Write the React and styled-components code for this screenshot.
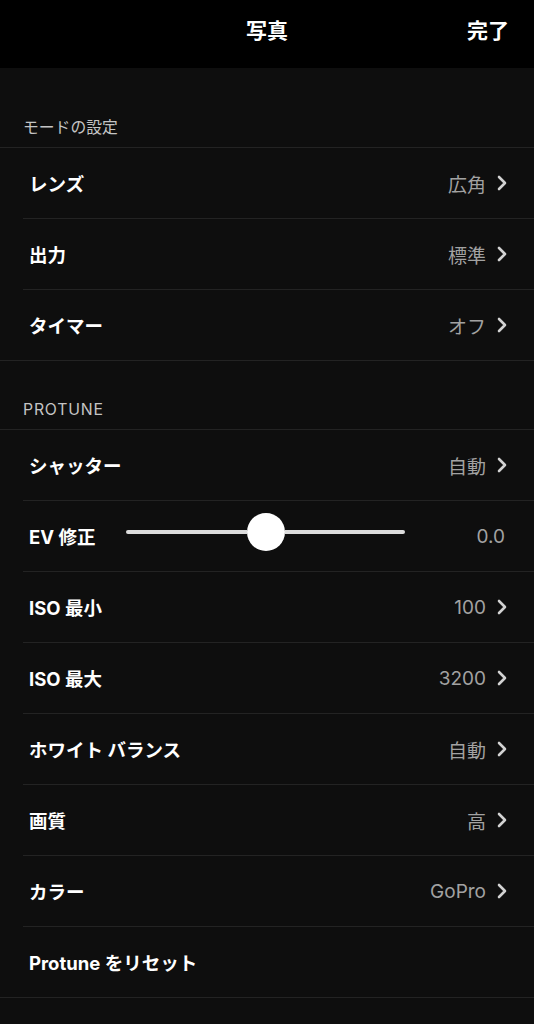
import React from "react";
import styled, { createGlobalStyle } from "styled-components";

const GlobalStyle = createGlobalStyle`
  html, body {
    margin: 0;
    padding: 0;
    background: #0e0e0e;
  }
  body {
    font-family: Inter, "Noto Sans CJK JP", sans-serif;
    -webkit-font-smoothing: antialiased;
  }
`;

const Page = styled.div`
  width: 534px;
  min-height: 1024px;
  background: #0e0e0e;
  color: #fff;
`;

const NavBar = styled.header`
  height: 68px;
  background: #000;
  display: grid;
  grid-template-columns: 1fr auto 1fr;
  align-items: center;
  padding: 0 25px 10px 25px;
  box-sizing: border-box;
`;

const NavTitle = styled.div`
  grid-column: 2;
  font-size: 21px;
  font-weight: 700;
  color: #fff;
`;

const NavAction = styled.div`
  grid-column: 3;
  justify-self: end;
  font-size: 21px;
  font-weight: 700;
  color: #fff;
`;

const SectionHeader = styled.div`
  height: ${(p) => p.$height}px;
  display: flex;
  align-items: flex-end;
  padding: 0 23px 9px;
  box-sizing: border-box;
  font-size: 15.8px;
  line-height: 20px;
  color: #c4c4c4;
  letter-spacing: ${(p) => (p.$latin ? "0.8px" : "0")};
`;

const Group = styled.section`
  border-top: 1px solid #232323;
  border-bottom: 1px solid #232323;
`;

const Row = styled.div`
  height: 70px;
  margin-left: 23px;
  padding: 0 ${(p) => (p.$plain ? 29 : 26)}px 0 6px;
  display: flex;
  align-items: center;
  box-sizing: content-box;
  border-bottom: ${(p) => (p.$last ? "none" : "1px solid #232323")};
`;

const Label = styled.div`
  font-size: 18.5px;
  font-weight: 700;
  color: #fff;
  white-space: nowrap;
  min-width: ${(p) => p.$minWidth || 0}px;
`;

const Value = styled.div`
  margin-left: auto;
  font-size: 19px;
  color: #a2a2a2;
  white-space: nowrap;
`;

const Chevron = styled.svg`
  margin-left: 10px;
  flex: none;
`;

const Slider = styled.div`
  flex: 0 0 279px;
  margin-left: 31px;
  margin-bottom: 8px;
  display: flex;
  align-items: center;
`;

const Track = styled.div`
  flex: 1;
  height: 4px;
  background: #dcdcdc;
  border-radius: ${(p) => (p.$side === "left" ? "2px 0 0 2px" : "0 2px 2px 0")};
`;

const Knob = styled.div`
  width: 38px;
  height: 38px;
  border-radius: 50%;
  background: #fff;
  flex: none;
`;

const ChevronIcon = () => (
  <Chevron width="12" height="16" viewBox="0 0 12 16">
    <polyline
      points="3,2 9,8 3,14"
      fill="none"
      stroke="#d2d2d2"
      strokeWidth="2.6"
      strokeLinecap="round"
      strokeLinejoin="round"
    />
  </Chevron>
);

const NavRow = ({ label, value, last }) => (
  <Row $last={last}>
    <Label>{label}</Label>
    <Value>{value}</Value>
    <ChevronIcon />
  </Row>
);

export default function App() {
  return (
    <Page>
      <GlobalStyle />
      <NavBar>
        <NavTitle>写真</NavTitle>
        <NavAction>完了</NavAction>
      </NavBar>

      <SectionHeader $height={79}>モードの設定</SectionHeader>
      <Group>
        <NavRow label="レンズ" value="広角" />
        <NavRow label="出力" value="標準" />
        <NavRow label="タイマー" value="オフ" last />
      </Group>

      <SectionHeader $height={68} $latin>
        PROTUNE
      </SectionHeader>
      <Group>
        <NavRow label="シャッター" value="自動" />
        <Row $plain>
          <Label $minWidth={66}>EV 修正</Label>
          <Slider>
            <Track $side="left" />
            <Knob />
            <Track $side="right" />
          </Slider>
          <Value>0.0</Value>
        </Row>
        <NavRow label="ISO 最小" value="100" />
        <NavRow label="ISO 最大" value="3200" />
        <NavRow label="ホワイト バランス" value="自動" />
        <NavRow label="画質" value="高" />
        <NavRow label="カラー" value="GoPro" />
        <Row $last $plain>
          <Label>Protune をリセット</Label>
        </Row>
      </Group>
    </Page>
  );
}
